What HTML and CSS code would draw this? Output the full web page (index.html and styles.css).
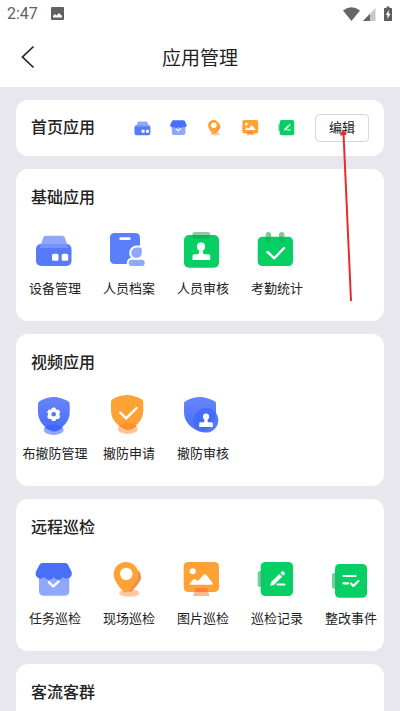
FILE: index.html
```html
<!DOCTYPE html>
<html lang="zh-CN">
<head>
<meta charset="utf-8">
<meta name="viewport" content="width=device-width, initial-scale=1">
<title>应用管理</title>
<link rel="stylesheet" href="styles.css">
</head>
<body>
<svg class="defs" aria-hidden="true">
  <defs>
    <linearGradient id="blue" x1="0" y1="0" x2="0" y2="1"><stop offset="0" stop-color="#6685fa"/><stop offset="1" stop-color="#486ffa"/></linearGradient>
    <symbol id="device" viewBox="0 0 40 40">
      <rect x="1" y="14" width="35.500" height="22" rx="5" fill="#577bf8"/>
      <path d="M10.500 5.700h17q1.500 0 2.200 1.500L33.500 18h-29L8.400 7.200q.6-1.500 2.100-1.500z" fill="#7d99fc" fill-opacity=".85"/>
      <rect x="17" y="23.700" width="6.500" height="7" rx="1.500" fill="#fff"/><rect x="26.700" y="23.700" width="6.500" height="7" rx="1.500" fill="#fff"/>
    </symbol>
    <symbol id="archive" viewBox="0 0 40 40">
      <rect x="1" y="3" width="30" height="31" rx="4.500" fill="#5b7efa"/>
      <rect x="10.500" y="7.200" width="11" height="2.800" rx=".8" fill="#fff"/>
      <path d="M27.500 17.500h3.500q1.800 0 1.800 1.800v3.400a5.300 5.300 0 1 1-5.300-5.200z" fill="#8fa8fd" stroke="#fff" stroke-width="4" paint-order="stroke"/>
      <rect x="19.700" y="29.700" width="16" height="6.300" rx="3.100" fill="#8fa8fd" stroke="#fff" stroke-width="4" paint-order="stroke"/>
    </symbol>
    <symbol id="audit" viewBox="0 0 40 40">
      <rect x="1" y="5" width="35" height="32.700" rx="5" fill="#06d064"/>
      <rect x="9.300" y="2" width="18" height="6.500" rx="2.500" fill="#149b4f" fill-opacity=".5"/>
      <circle cx="18" cy="16.700" r="4.100" fill="#fff"/>
      <path d="M16.200 18h3.600q-.3 3.500.8 6.300h4.900q1.700 0 1.700 1.700v4H9.500v-4q0-1.700 1.700-1.700h4.200q1.100-2.800.8-6.300z" fill="#fff"/>
    </symbol>
    <symbol id="calendar" viewBox="0 0 40 40">
      <rect x=".7" y="6.700" width="35.300" height="29.300" rx="4.500" fill="#06d064"/>
      <rect x="8.700" y="2" width="5.400" height="10" rx="2.700" fill="#16ad59" fill-opacity=".6"/><rect x="22" y="2" width="5.400" height="10" rx="2.700" fill="#16ad59" fill-opacity=".6"/>
      <path d="M10.500 22l6.800 6.300L27 18" fill="none" stroke="#fff" stroke-width="2.400" stroke-linecap="round" stroke-linejoin="round"/>
    </symbol>
    <symbol id="shield-gear" viewBox="0 0 40 40">
      <ellipse cx="18.700" cy="35" rx="10" ry="5" fill="#8fa8fd"/>
      <path d="M18.800 2c4.500 0 10 2 14 4q1.900.9 1.900 3v8c0 9-6 15-13 18.300q-2.900 1.400-5.800 0C9 32 3 26 3 17V9q0-2.100 1.900-3 7-4 13.900-4z" fill="url(#blue)"/>
      <path d="M9.500 32.500q9.200-6 18.400 0-6.100 4.500-9.200 4t-9.200-4z" fill="#3f67fc"/>
      <g fill="#fff"><circle cx="18.700" cy="19.300" r="5.600"/><g id="tooth"><rect x="16.500" y="12.500" width="4.400" height="13.600" rx="1.600"/></g><use href="#tooth" transform="rotate(60 18.700 19.300)"/><use href="#tooth" transform="rotate(120 18.700 19.300)"/></g>
      <circle cx="18.700" cy="19.300" r="2.300" fill="#5679fa"/>
    </symbol>
    <symbol id="shield-check" viewBox="0 0 40 40">
      <ellipse cx="18.700" cy="34" rx="10" ry="5" fill="#fdc49b"/>
      <path d="M18.200 0c4.500 0 10 2 14.200 4q1.900.9 1.900 3v8.500c0 9-6 15-13 18.500q-2.900 1.400-5.800 0C8.300 30.500 2 24.500 2 15.500V7q0-2.100 1.900-3 7.200-4 14.300-4z" fill="#ffa236"/>
      <path d="M9.500 31q9.200-6 18.400 0-6.100 4.500-9.200 4t-9.200-4z" fill="#ff9128"/>
      <path d="M11.300 17.700l5.800 5.700L27.600 13" fill="none" stroke="#fff" stroke-width="2.400" stroke-linecap="round" stroke-linejoin="round"/>
    </symbol>
    <symbol id="shield-audit" viewBox="0 0 40 40">
      <path d="M17 2c4.500 0 10 2 14.400 4Q33 6.700 33 8.500V17c0 9-5 16-12.500 19.600q-3 .8-6-.8C6 31.500 1 25.500 1 17V8.500Q1 6.700 2.600 6 9.800 2 17 2z" fill="url(#blue)"/>
      <circle cx="23" cy="25.300" r="12.300" fill="#416bfc" fill-opacity=".9"/>
      <circle cx="23" cy="21.700" r="3.100" fill="#fff"/>
      <path d="M21.600 23h2.800q-.2 2.800.6 4.300h3.400q1.400 0 1.400 1.400V32H16.200v-3.300q0-1.400 1.400-1.400H21q.8-1.500.6-4.300z" fill="#fff"/>
    </symbol>
    <symbol id="store" viewBox="0 0 40 40">
      <path d="M4 12h30.300v19q0 4.700-4.700 4.700H8.700Q4 35.700 4 31z" fill="#8fa8fd"/>
      <path d="M7.500 3h22.700q2 0 2.900 1.800l3.400 7q1 3-1 5.200-4 3-7.500 0-1.800 3-4.600 3t-4.700-3q-1.800 3-4.700 3t-4.600-3q-3.500 3-7.500 0-2-2.200-1-5.200l3.600-7Q5.400 3 7.500 3z" fill="#486ffa"/>
      <path d="M14 22.300l4.300 4.200 5.300-5.200" fill="none" stroke="#fff" stroke-width="2.400" stroke-linecap="round" stroke-linejoin="round"/>
    </symbol>
    <symbol id="pin" viewBox="0 0 40 40">
      <ellipse cx="20.300" cy="33" rx="10.300" ry="3.800" fill="#fdc9a5"/>
      <path d="M29 10q3.800 4 2.800 9-1 4-9.800 13l-3-1z" fill="#f08c50"/>
      <path d="M17 2c6.800 0 12.300 5.300 12.300 12 0 6.600-5 12.500-9.800 17.600q-2.500 2-5 0C9.700 26.500 4.700 20.600 4.700 14 4.700 7.300 10.200 2 17 2z" fill="#ffa236"/>
      <circle cx="17.300" cy="14" r="6.200" fill="#fff"/>
    </symbol>
    <symbol id="picture" viewBox="0 0 40 40">
      <rect x=".7" y="2" width="35.300" height="30" rx="4.500" fill="#ffa236"/>
      <path d="M12.600 28h11.400l2.400 8H10.300z" fill="#fdb98b"/><path d="M12.600 28h11.400l1.200 4H11.400z" fill="#f48335"/>
      <circle cx="9.700" cy="11.300" r="3" fill="#fff"/>
      <path d="M7 24.700q-.4-1 .5-2.200l2.200-2.600q1.300-1.400 2.800-.5l2.500 1.500 5.300-6q1.500-1.500 3 0l5.600 6.800q2 3-.9 3z" fill="#fff"/>
    </symbol>
    <symbol id="record" viewBox="0 0 40 40">
      <rect x="3.700" y="2" width="32.300" height="34" rx="4.500" fill="#06d064"/>
      <rect x=".7" y="11" width="6.600" height="16" rx="2.500" fill="#21b965" fill-opacity=".65"/>
      <path d="M13.200 25.800l.9-3.700 8.200-8.200 2.800 2.800-8.200 8.200zM23.300 12.900l1.500-1.500q.8-.7 1.600 0l1.200 1.200q.8.800 0 1.600l-1.500 1.500z" fill="#fff"/>
      <path d="M20.500 24.500h7" stroke="#fff" stroke-width="2" stroke-linecap="round"/>
    </symbol>
    <symbol id="rectify" viewBox="0 0 40 40">
      <rect x="4" y="4" width="32" height="33.700" rx="4.500" fill="#06d064"/>
      <rect x="1" y="12.700" width="6.800" height="16" rx="2.500" fill="#21b965" fill-opacity=".65"/>
      <path d="M12.500 16h12M12.500 23.300h4.500M20 23.500l2.300 2.500 5.200-5" fill="none" stroke="#fff" stroke-width="2.200" stroke-linecap="round" stroke-linejoin="round"/>
    </symbol>
  </defs>
</svg>

<div class="status">
  <span class="time">2:47</span>
  <svg class="photo" viewBox="0 0 13 13" width="13" height="13" aria-hidden="true"><rect width="13" height="13" rx="1" fill="#616161"/><path d="M2 10.500V9l2-2 1.500 1.600L8 6l3 3v1.500z" fill="#fff"/></svg>
  <svg class="signals" viewBox="0 0 50 16" width="50" height="16" aria-hidden="true">
    <path d="M0 4.500Q8.500-2 17 4.500L8.500 15z" fill="#666"/>
    <path d="M32.500 2v13H20z" fill="#c8c8c8"/><path d="M27 7.700V15h-7z" fill="#666"/>
    <path d="M41.500 2H43.500V.5h3V2h2q.5 0 .5.500v12q0 .5-.5.500h-7q-.5 0-.5-.5v-12q0-.5.500-.5z" fill="#5e5e5e"/><path d="M45.800 4l-3 5h1.700v4l3-5.200h-1.700z" fill="#fff"/>
  </svg>
</div>
<header class="bar">
  <button class="back" type="button" aria-label="返回"><svg viewBox="0 0 14 24" width="14" height="24" aria-hidden="true"><path d="M12.500 1.500L1.500 12l11 10.500" fill="none" stroke="#222" stroke-width="1.700"/></svg></button>
  <h1>应用管理</h1>
</header>

<main>
  <section class="card home">
    <h2>首页应用</h2>
    <div class="minis">
      <svg><use href="#device"/></svg><svg><use href="#store"/></svg><svg><use href="#pin"/></svg><svg><use href="#picture"/></svg><svg><use href="#record"/></svg>
    </div>
    <div class="edit-wrap">
      <button class="edit" type="button">编辑</button>
      <svg class="arrow" viewBox="0 0 16 174" width="16" height="174" aria-hidden="true"><path d="M4.500 4L12 172" stroke="#e82b30" stroke-width="2"/><path d="M4 0L7.500 6l-6.500.5z" fill="#e82b30"/></svg>
    </div>
  </section>
  <section class="card">
    <h2>基础应用</h2>
    <div class="apps">
      <a href="#device"><svg><use href="#device"/></svg>设备管理</a>
      <a href="#archive"><svg><use href="#archive"/></svg>人员档案</a>
      <a href="#audit"><svg><use href="#audit"/></svg>人员审核</a>
      <a href="#calendar"><svg><use href="#calendar"/></svg>考勤统计</a>
    </div>
  </section>
  <section class="card">
    <h2>视频应用</h2>
    <div class="apps">
      <a href="#shield-gear"><svg><use href="#shield-gear"/></svg>布撤防管理</a>
      <a href="#shield-check"><svg><use href="#shield-check"/></svg>撤防申请</a>
      <a href="#shield-audit"><svg><use href="#shield-audit"/></svg>撤防审核</a>
    </div>
  </section>
  <section class="card">
    <h2>远程巡检</h2>
    <div class="apps">
      <a href="#store"><svg><use href="#store"/></svg>任务巡检</a>
      <a href="#pin"><svg><use href="#pin"/></svg>现场巡检</a>
      <a href="#picture"><svg><use href="#picture"/></svg>图片巡检</a>
      <a href="#record"><svg><use href="#record"/></svg>巡检记录</a>
      <a href="#rectify"><svg><use href="#rectify"/></svg>整改事件</a>
    </div>
  </section>
  <section class="card last">
    <h2>客流客群</h2>
  </section>
</main>
</body>
</html>
```
FILE: styles.css
```css
* { box-sizing: border-box; }
body {
  margin: 0;
  min-height: 100vh;
  display: flex;
  flex-direction: column;
  background: #fff;
  color: #222;
  font-family: Roboto, "Noto Sans CJK SC", sans-serif;
}
h1, h2 { margin: 0; }
.defs { position: absolute; width: 0; height: 0; }

.status {
  display: flex;
  align-items: center;
  height: 27px;
  padding: 0 7px;
}
.time { font-size: 16px; color: #616161; }
.photo { margin-left: 13px; }
.signals { margin-left: auto; }

.bar {
  display: grid;
  grid-template-columns: 56px 1fr 56px;
  align-items: center;
  height: 60px;
}
.back {
  display: flex;
  justify-content: center;
  padding: 8px;
  border: 0;
  background: none;
}
.bar h1 {
  padding-top: 3px;
  text-align: center;
  font-size: 19px;
  font-weight: 400;
  line-height: 28px;
}

main {
  flex: 1;
  display: flex;
  flex-direction: column;
  gap: 13px;
  padding: 13px 16px 0;
  background: #e8e7ed;
}
.card {
  padding: 16px 0 21px;
  border-radius: 12px;
  background: #fff;
}
.card h2 {
  padding-left: 15px;
  font-size: 16px;
  font-weight: 500;
  line-height: 26px;
}
.last {
  flex: 1;
  padding-bottom: 0;
  border-radius: 12px 12px 0 0;
}

.home {
  display: flex;
  align-items: center;
  padding: 14px 15px 14px 0;
}
.home h2 { line-height: 28px; }
.minis {
  display: flex;
  gap: 18px;
  margin-left: auto;
}
.minis svg { width: 18px; height: 18px; }
.edit-wrap { position: relative; margin-left: 19px; }
.edit {
  display: block;
  padding: 3px 13px;
  border: 1px solid #d8d8da;
  border-radius: 4px;
  background: #fff;
  color: #222;
  font: 13px/20px Roboto, "Noto Sans CJK SC", sans-serif;
}
.arrow { position: absolute; top: 15px; left: 24px; pointer-events: none; }

.apps {
  display: grid;
  grid-template-columns: repeat(5, minmax(0, 1fr));
  gap: 8px;
  margin-top: 19px;
  padding-left: 6px;
}
.apps a {
  display: flex;
  flex-direction: column;
  align-items: center;
  gap: 8px;
  color: #222;
  font-size: 13px;
  line-height: 22px;
  white-space: nowrap;
  text-decoration: none;
}
.apps svg { width: 40px; height: 40px; }
```
